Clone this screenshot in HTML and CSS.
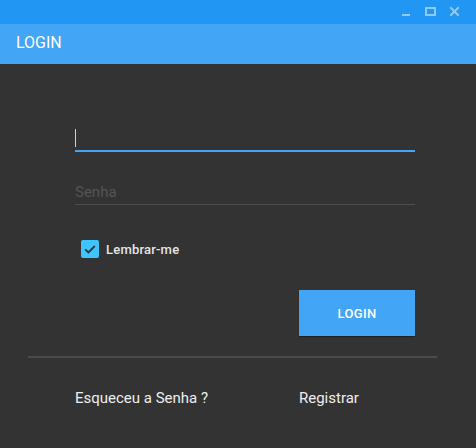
FILE: index.html
```html
<!DOCTYPE html>
<html lang="pt">
<head>
<meta charset="utf-8">
<title>Login</title>
<link rel="stylesheet" href="styles.css">
</head>
<body>
<div class="window">
  <div class="titlebar">
    <svg class="controls" width="76" height="24" viewBox="0 0 76 24">
      <rect x="2" y="14" width="8" height="2" fill="#90CAF9"/>
      <rect x="26" y="8" width="9" height="7" fill="none" stroke="#90CAF9" stroke-width="2"/>
      <path d="M51 8 L58 15 M58 8 L51 15" stroke="#90CAF9" stroke-width="2" stroke-linecap="square" fill="none"/>
    </svg>
  </div>
  <header class="appbar">LOGIN</header>
  <main class="content">
    <div class="form">
      <div class="field field-active"><span class="caret"></span></div>
      <div class="field field-pass"><span class="placeholder">Senha</span></div>
      <div class="check-row">
        <span class="checkbox">
          <svg width="18" height="18" viewBox="0 0 18 18"><path d="M4.2 9.4 L7.4 12.4 L13.8 6" fill="none" stroke="#333333" stroke-width="1.8"/></svg>
        </span>
        <span class="check-label">Lembrar-me</span>
      </div>
      <div class="button-row">
        <button class="btn-login">LOGIN</button>
      </div>
    </div>
    <div class="divider"></div>
    <div class="links">
      <span class="link">Esqueceu a Senha ?</span>
      <span class="link">Registrar</span>
    </div>
  </main>
</div>
</body>
</html>
```
FILE: styles.css
```css
html, body {
  margin: 0;
  padding: 0;
  background: #333333;
  font-family: Roboto, "Noto Sans", sans-serif;
}
.window {
  width: 476px;
  height: 448px;
  background: #333333;
  overflow: hidden;
}
.titlebar {
  height: 24px;
  background: #2196F3;
  display: flex;
  justify-content: flex-end;
}
.controls {
  display: block;
}
.appbar {
  height: 40px;
  box-sizing: border-box;
  padding: 9px 16px 12px;
  line-height: 19px;
  font-size: 16px;
  color: #ffffff;
  background: #42A5F5;
}
.content {
  padding-top: 62px;
}
.form {
  margin-left: 75px;
  width: 340px;
}
.field-active {
  height: 24px;
  display: flex;
  align-items: flex-start;
  border-bottom: 2px solid #42A5F5;
}
.caret {
  display: block;
  width: 1px;
  height: 18px;
  margin-top: 3px;
  background: #d0d0d0;
}
.field-pass {
  margin-top: 29px;
  height: 23px;
  border-bottom: 1px solid #505050;
}
.placeholder {
  display: block;
  font-size: 15px;
  line-height: 23px;
  color: #555555;
}
.check-row {
  margin-top: 35px;
  height: 18px;
  display: flex;
  align-items: center;
  gap: 7px;
  padding-left: 6px;
}
.checkbox {
  width: 18px;
  height: 18px;
  border-radius: 2px;
  background: #40C4FF;
  display: block;
}
.checkbox svg {
  display: block;
}
.check-label {
  font-size: 13px;
  font-weight: 500;
  color: #e6e6e6;
  letter-spacing: 0.2px;
}
.button-row {
  display: flex;
  justify-content: flex-end;
  margin-top: 32px;
}
.btn-login {
  width: 116px;
  height: 46px;
  border: none;
  border-radius: 0;
  background: #42A5F5;
  color: #ffffff;
  font-family: Roboto, sans-serif;
  font-size: 13px;
  font-weight: 500;
  letter-spacing: 0.3px;
  box-shadow: 0 1px 1px rgba(0, 0, 0, 0.35);
  padding: 0;
}
.divider {
  margin: 20px 0 0 28px;
  width: 409px;
  height: 2px;
  background: #4a4a4a;
}
.links {
  margin: 31px 0 0 75px;
  width: 340px;
  display: grid;
  grid-template-columns: 224px 1fr;
}
.link {
  font-size: 15px;
  line-height: 18px;
  color: #eeeeee;
}
```
